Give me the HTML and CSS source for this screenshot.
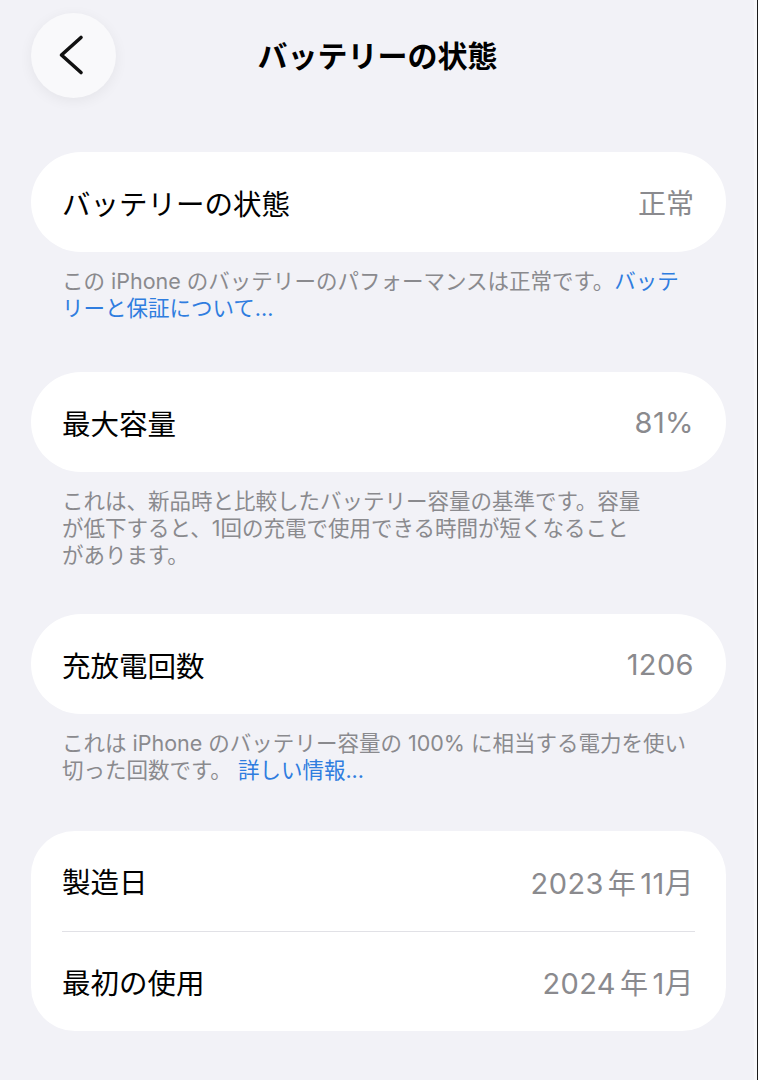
FILE: index.html
```html
<!DOCTYPE html>
<html lang="ja">
<head>
<meta charset="utf-8">
<title>バッテリーの状態</title>
<link rel="stylesheet" href="styles.css">
</head>
<body>
<div class="page">
  <header class="nav">
    <div class="nav-left">
      <button class="back" aria-label="戻る">
        <svg width="85" height="85" viewBox="0 0 85 85"><path d="M50 24.5 L30.5 42 L50 59.5" fill="none" stroke="#111" stroke-width="3.6" stroke-linecap="round" stroke-linejoin="round"/></svg>
      </button>
    </div>
    <h1 class="title">バッテリーの状態</h1>
    <div class="nav-right"></div>
  </header>

  <main class="content">
    <section class="group">
      <div class="card">
        <div class="row"><span class="label">バッテリーの状態</span><span class="value value-cjk">正常</span></div>
      </div>
      <p class="footer">この iPhone のバッテリーのパフォーマンスは正常です。<a class="link">バッテ<br>リーと保証について...</a></p>
    </section>

    <section class="group group-wide">
      <div class="card">
        <div class="row"><span class="label">最大容量</span><span class="value">81%</span></div>
      </div>
      <p class="footer">これは、新品時と比較したバッテリー容量の基準です。容量<br>が低下すると、1回の充電で使用できる時間が短くなること<br>があります。</p>
    </section>

    <section class="group group-tight">
      <div class="card">
        <div class="row"><span class="label">充放電回数</span><span class="value">1206</span></div>
      </div>
      <p class="footer">これは iPhone のバッテリー容量の 100% に相当する電力を使い<br>切った回数です。 <a class="link">詳しい情報...</a></p>
    </section>

    <section class="group">
      <div class="card card-list">
        <div class="row"><span class="label">製造日</span><span class="value">2023<span class="cjk-gap">年</span>11月</span></div>
        <div class="sep"></div>
        <div class="row"><span class="label">最初の使用</span><span class="value">2024<span class="cjk-gap">年</span>1月</span></div>
      </div>
    </section>
  </main>
</div>
</body>
</html>
```

FILE: styles.css
```css
* { box-sizing: border-box; }

html, body {
  margin: 0;
  padding: 0;
}

body {
  width: 758px;
  min-height: 1080px;
  background: linear-gradient(to right, #f2f2f7 0, #f2f2f7 754px, #f8f8fa 754px, #f8f8fa 757px, #1a1a1a 757px);
  font-family: Inter, "Noto Sans CJK JP", sans-serif;
  color: #000;
}

.page {
  width: 758px;
  padding-right: 4px;
}

.nav {
  display: grid;
  grid-template-columns: 1fr auto 1fr;
  align-items: center;
  padding: 13px 30px 0 31px;
  height: 98px;
}

.back {
  width: 85px;
  height: 85px;
  border-radius: 50%;
  border: none;
  padding: 0;
  background: #f9f9fb;
  box-shadow: 0 3px 14px rgba(0, 0, 0, 0.06);
  display: block;
}

.back svg { display: block; }

.title {
  margin: 0 0 4px 0;
  font-size: 30px;
  font-weight: 700;
  font-family: "Noto Sans CJK JP", sans-serif;
  color: #000;
}

.content {
  padding: 54px 28px 0 31px;
  display: flex;
  flex-direction: column;
}

.group {
  display: flex;
  flex-direction: column;
  margin-bottom: 48px;
}

.group-wide { margin-bottom: 45px; }
.group-tight { margin-bottom: 47px; }
.group:first-child { margin-bottom: 50px; }

.card {
  background: #fff;
  border-radius: 50px;
  overflow: hidden;
}

.card-list {
  border-radius: 44px;
}

.row {
  height: 100px;
  display: flex;
  align-items: center;
  justify-content: space-between;
  padding: 0 32px 0 31px;
}

.card-list .row { height: 99.5px; }

.label {
  font-size: 28.5px;
  font-family: "Noto Sans CJK JP", sans-serif;
  color: #000;
}

.value {
  font-size: 29px;
  letter-spacing: 0.4px;
  color: #8a8a8e;
}

.value-cjk {
  font-size: 28px;
  letter-spacing: 0;
}

.cjk-gap {
  font-family: "Noto Sans CJK JP", sans-serif;
  font-size: 28px;
  margin: 0 4px;
}

.sep {
  height: 1px;
  background: #e1e1e6;
  margin: 0 31px;
}

.footer {
  margin: 0;
  padding: 16px 31px 0 31px;
  font-size: 21.5px;
  line-height: 27px;
  color: #8a8a8e;
}

.link {
  color: #2f7ddf;
}
```
